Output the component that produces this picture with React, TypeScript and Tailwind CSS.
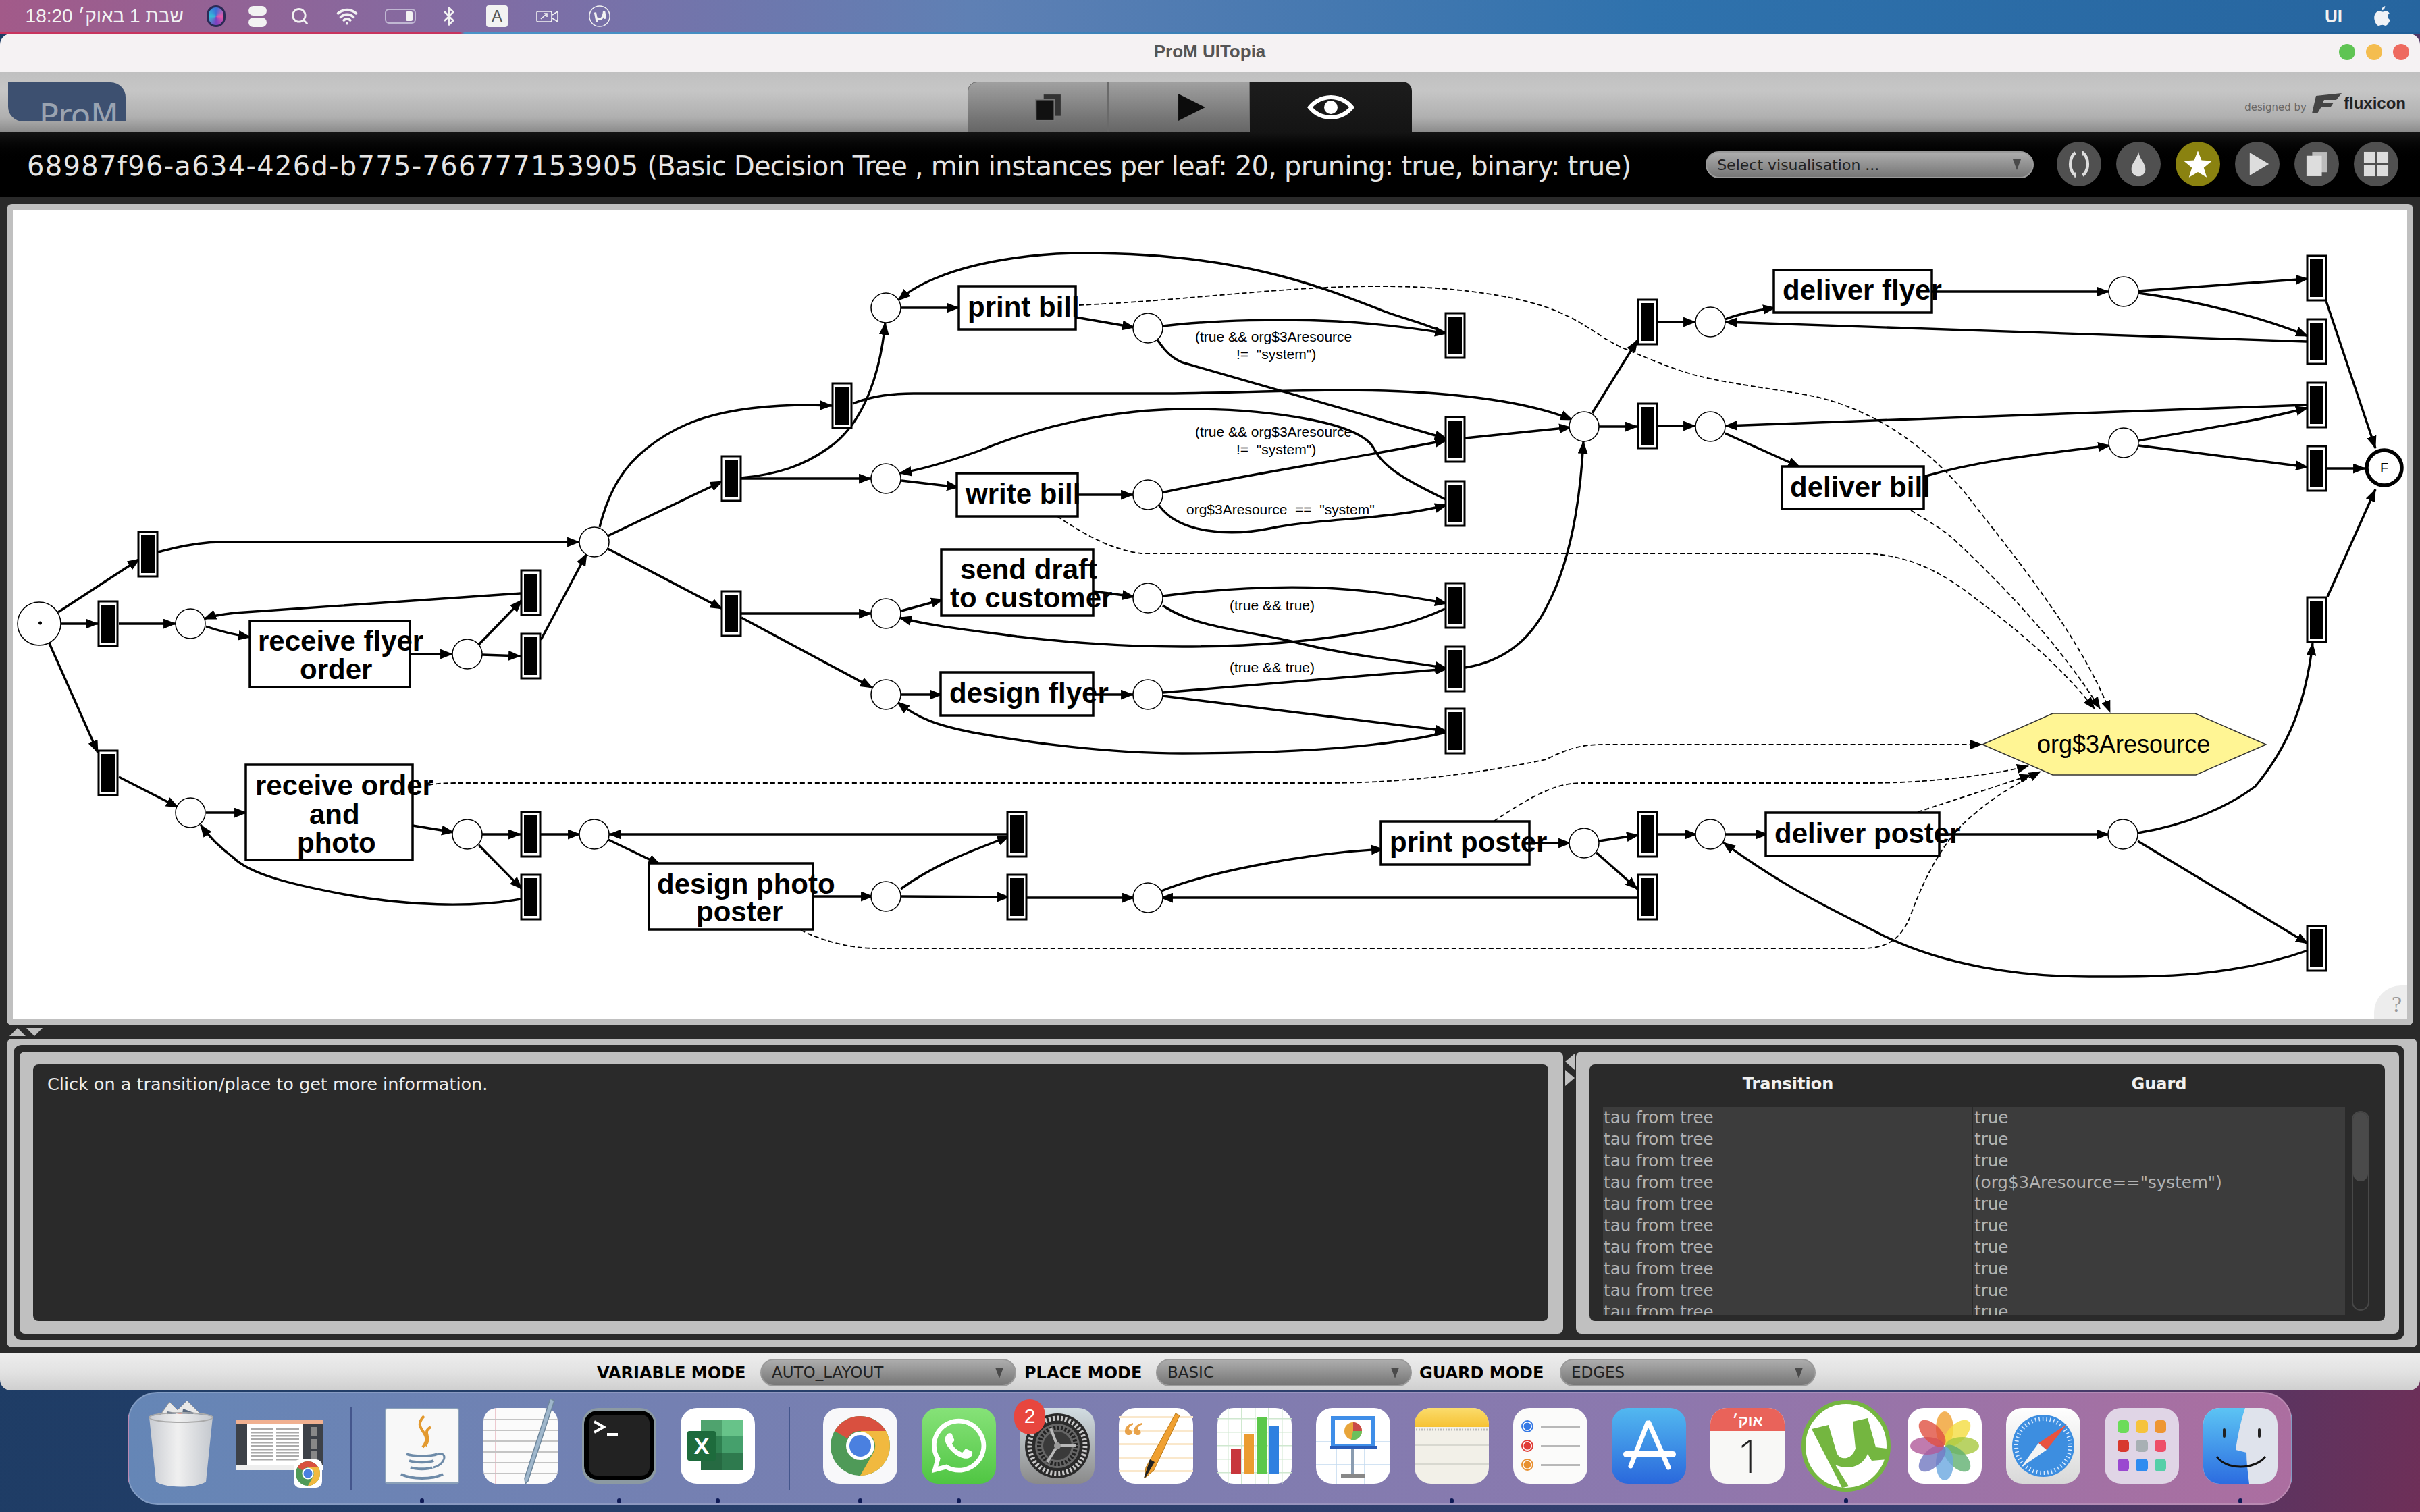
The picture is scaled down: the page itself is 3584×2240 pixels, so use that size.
import { Search, Wifi, Bluetooth } from 'lucide-react'
import { FaWhatsapp } from 'react-icons/fa'

// one canvas unit = one page pixel, the viewBox is offset by the panel's place on the page
const bars: [number, number][] = [
  [219, 821], [160, 924], [786, 878], [786, 972], [1083, 709], [1083, 909], [1247, 601],
  [2155, 497], [2155, 651], [2155, 746], [2155, 897], [2155, 991], [2155, 1083],
  [2440, 477], [2440, 631], [3431, 412], [3431, 506], [3431, 600], [3431, 694], [3431, 918],
  [160, 1145], [786, 1236], [786, 1329], [1506, 1236], [1506, 1329], [2440, 1236], [2440, 1329], [3431, 1405],
]

const places: [number, number][] = [
  [282, 924], [692, 969], [880, 803], [1312, 456], [1312, 709], [1312, 909], [1312, 1029],
  [1700, 486], [1700, 733], [1700, 886], [1700, 1029], [2346, 632], [2533, 477], [2533, 632],
  [3145, 432], [3145, 656], [282, 1204], [692, 1236], [880, 1236], [1312, 1328], [1700, 1330],
  [2346, 1249], [2533, 1236], [3144, 1236],
]

const boxes = [
  [370, 920, 237, 98], [1420, 424, 173, 64], [1417, 701, 179, 64], [1394, 814, 225, 98], [1393, 996, 226, 64],
  [2627, 400, 234, 63], [2639, 691, 210, 63], [364, 1133, 247, 141], [961, 1279, 243, 98], [2045, 1217, 220, 64], [2615, 1204, 257, 64],
]

const labels: [string, number, number][] = [
  ['receive flyer', 382, 964], ['order', 444, 1006], ['print bill', 1433, 469], ['write bill', 1430, 746],
  ['send draft', 1422, 858], ['to customer', 1407, 900], ['design flyer', 1406, 1041], ['deliver flyer', 2640, 444],
  ['deliver bill', 2651, 736], ['receive order', 378, 1178], ['and', 458, 1221], ['photo', 440, 1263],
  ['design photo', 973, 1324], ['poster', 1031, 1365], ['print poster', 2058, 1262], ['deliver poster', 2628, 1249],
]

const guards: [string, number, number][] = [
  ['(true && org$3Aresource', 1770, 506], ['!=  "system")', 1831, 532],
  ['(true && org$3Aresource', 1770, 647], ['!=  "system")', 1831, 673],
  ['org$3Aresource  ==  "system"', 1757, 762], ['(true && true)', 1821, 904], ['(true && true)', 1821, 996],
]

const edges = [
  'M86 907L207 828', 'M90 924L145 924', 'M176 924L260 924', 'M305 928C325 935 345 940 371 944',
  'M771 879L348 908C330 910 315 912 302 917', 'M607 969L670 969', 'M709 955L773 889', 'M714 970L771 972',
  'M801 948L869 820', 'M234 818C270 808 300 803 329 803L858 803', 'M900 794L1070 713', 'M900 813L1070 902',
  'M888 781C902 725 925 690 957 665C1000 630 1060 600 1200 600L1232 601',
  'M1098 708C1150 703 1190 690 1225 665C1285 625 1305 540 1311 478', 'M1098 709L1290 709', 'M1098 909L1290 909', 'M1098 915L1292 1019',
  'M1335 456L1420 456', 'M1593 470L1680 485', 'M1722 483C1800 474 1900 472 1980 476C2050 480 2100 487 2143 494',
  'M1714 503C1725 520 1735 530 1751 537L2143 650',
  'M2143 494C2100 475 2070 470 2042 458C1950 422 1830 375 1606 375C1520 375 1440 390 1391 410C1365 420 1345 432 1330 445',
  'M1263 598C1290 587 1320 583 1353 583L1720 583C1800 583 1900 578 1988 578C2120 578 2250 590 2329 622',
  'M2170 649L2327 633', 'M1720 730C1860 700 2000 680 2143 652', 'M1335 712L1420 722', 'M1596 733L1678 733',
  'M1716 748C1745 790 1820 795 1880 783C1950 768 2060 770 2143 748',
  'M2143 741C2090 715 2050 695 2035 665C2015 625 1880 606 1759 606C1640 606 1530 635 1450 668C1410 682 1370 695 1332 701',
  'M1335 905L1397 888', 'M1619 876L1680 884', 'M1722 883C1800 873 1880 868 1960 871C2030 874 2090 884 2143 894',
  'M1722 897C1770 930 1850 935 1912 950C1990 970 2070 978 2143 990',
  'M2140 902C2090 925 2050 932 2011 938C1930 952 1840 958 1751 958C1650 958 1570 950 1506 943C1450 935 1380 928 1332 915',
  'M2170 989C2225 980 2265 950 2290 900C2325 835 2340 750 2345 654', 'M1335 1029L1395 1029', 'M1619 1029L1678 1029',
  'M1722 1026L2143 991', 'M1722 1031L2143 1083',
  'M2141 1085C2040 1110 1880 1116 1751 1116C1640 1116 1520 1100 1440 1085C1390 1075 1360 1065 1329 1040',
  'M2358 612L2425 504', 'M2368 632L2425 632', 'M2455 477L2511 477', 'M2455 631L2511 631', 'M2555 473C2575 465 2600 460 2629 456',
  'M2861 432L3123 432', 'M3167 431L3418 413', 'M3167 434C3250 445 3350 470 3418 498', 'M3416 506L2555 477',
  'M2555 642L2666 692', 'M2849 706C2940 680 3030 672 3125 660', 'M3167 653C3260 635 3340 625 3418 604', 'M3167 660L3418 692',
  'M3416 600L2555 631', 'M3447 694L3503 694', 'M3445 446L3518 664', 'M3447 884L3518 725',
  'M73 953L145 1115', 'M176 1151L264 1196', 'M305 1204L365 1204', 'M611 1223L672 1233', 'M714 1236L771 1236', 'M801 1236L859 1236',
  'M709 1252L773 1317', 'M771 1332C700 1345 600 1342 510 1325C430 1310 370 1295 345 1270C325 1255 310 1240 297 1222',
  'M901 1244L978 1281', 'M1491 1236L902 1236', 'M1334 1317C1385 1280 1440 1260 1495 1239', 'M1204 1328L1293 1328', 'M1335 1328L1495 1329',
  'M1521 1330L1680 1330', 'M2425 1330L1719 1330', 'M1720 1320C1780 1295 1920 1265 2049 1258', 'M2265 1249L2326 1249', 'M2368 1246L2427 1237',
  'M2364 1263L2425 1317', 'M2456 1236L2513 1236', 'M2555 1236L2618 1236', 'M2872 1236L3123 1236',
  'M3166 1234C3240 1222 3300 1195 3340 1165C3390 1105 3415 1040 3425 953', 'M3166 1246L3418 1398',
  'M3418 1408C3300 1450 3180 1447 3094 1447C2990 1447 2880 1430 2791 1387C2720 1350 2650 1320 2552 1248',
]

const dashed = [
  'M1598 452C1760 445 1900 424 2042 424C2160 424 2260 440 2310 463C2350 480 2370 500 2400 514C2450 535 2490 552 2528 560C2600 575 2660 580 2702 591C2790 615 2860 670 2910 730C2980 820 3080 940 3125 1055',
  'M2830 756C2860 775 2880 785 2900 805C2990 890 3060 970 3110 1050',
  'M1566 765C1610 795 1650 815 1690 820L2762 820C2830 822 2880 850 2930 890C2990 935 3050 985 3102 1050',
  'M635 1163C645 1161 655 1160 673 1160L1965 1160C2100 1160 2220 1140 2290 1125C2320 1110 2340 1103 2374 1103L2935 1103',
  'M2212 1217C2260 1185 2300 1160 2341 1160L2767 1160C2850 1160 2940 1150 3004 1135',
  'M2840 1203L3008 1148',
  'M1186 1378C1220 1395 1260 1405 1299 1405L2759 1405C2790 1405 2815 1395 2830 1355C2850 1300 2880 1240 2925 1205C2960 1175 2990 1160 3022 1143',
]

function PetriNet() {
  return (
    <svg viewBox="19 311 3546 1199" className="block w-[3546px] h-[1199px]">
      <defs>
        <marker id="head" viewBox="0 0 18 14" refX="17" refY="7" markerWidth="19" markerHeight="15" markerUnits="userSpaceOnUse" orient="auto">
          <path d="M0 0L18 7L0 14z" />
        </marker>
        <marker id="headDash" viewBox="0 0 18 14" refX="17" refY="7" markerWidth="18" markerHeight="14" markerUnits="userSpaceOnUse" orient="auto">
          <path d="M0 0L18 7L0 14z" />
        </marker>
      </defs>
      {dashed.map((d, i) => (
        <path key={i} d={d} fill="none" stroke="#000" strokeWidth={1.8} strokeDasharray="7 4" markerEnd="url(#headDash)" />
      ))}
      {edges.map((d, i) => (
        <path key={i} d={d} fill="none" stroke="#000" strokeWidth={3.4} markerEnd="url(#head)" />
      ))}
      <polygon points="2936,1103 3040,1057 3251,1057 3356,1103 3252,1148 3040,1148" fill="#fff594" stroke="#333" strokeWidth={1.5} />
      <text x={3017} y={1115} fontSize={36} className="font-['Liberation_Sans',sans-serif]">org$3Aresource</text>
      {boxes.map(([x, y, w, h], i) => (
        <rect key={i} x={x} y={y} width={w} height={h} fill="#fff" stroke="#000" strokeWidth={3.5} />
      ))}
      {places.map(([cx, cy], i) => (
        <circle key={i} cx={cx} cy={cy} r={22} fill="#fff" stroke="#000" strokeWidth={1.5} />
      ))}
      <circle cx={58} cy={924} r={32} fill="#fff" stroke="#000" strokeWidth={1.5} />
      <circle cx={59.5} cy={923} r={2.5} />
      <circle cx={3531} cy={693} r={26} fill="#fff" stroke="#000" strokeWidth={5.5} />
      <text x={3531} y={700} fontSize={20} textAnchor="middle" className="font-['Liberation_Sans',sans-serif]">F</text>
      {bars.map(([cx, cy], i) => (
        <g key={i}>
          <rect x={cx - 14} y={cy - 33} width={28} height={66} fill="#fff" stroke="#000" strokeWidth={3} />
          <rect x={cx - 10} y={cy - 28} width={20} height={56} fill="#000" />
        </g>
      ))}
      {labels.map(([t, x, y], i) => (
        <text key={i} x={x} y={y} fontSize={42} fontWeight={700} className="font-['Liberation_Sans',sans-serif]">{t}</text>
      ))}
      {guards.map(([t, x, y], i) => (
        <text key={i} x={x} y={y} fontSize={21} xmlSpace="preserve" className="font-['Liberation_Sans',sans-serif]">{t}</text>
      ))}
    </svg>
  )
}

function Select({ label, className, small }: { label: string; className: string; small?: boolean }) {
  return (
    <div className={`flex items-center justify-between rounded-full border-2 border-[#9a9a9a] bg-gradient-to-b from-[#adadad] to-[#767676] ${className}`}>
      <span className={`font-['DejaVu_Sans',sans-serif] text-[#222] ${small ? 'text-[22px]' : 'text-[23px]'}`}>{label}</span>
      <svg viewBox="0 0 12 16" className="w-[14px] h-[16px]"><path d="M0 0H12L6 16z" fill="#4a4a4a" /></svg>
    </div>
  )
}

function RoundButton({ children, active }: { children: React.ReactNode; active?: boolean }) {
  return (
    <div className={`w-[66px] h-[66px] rounded-full flex items-center justify-center ${active ? 'bg-[#8a8210]' : 'bg-[#505050]'}`}>
      {children}
    </div>
  )
}

function HeaderButtons() {
  return (
    <div className="flex gap-[22px]">
      <RoundButton>
        <svg viewBox="0 0 40 44" className="w-[36px] h-[40px]" fill="none" stroke="#ddd" strokeWidth={5}>
          <path d="M14 3C3 12 3 32 14 41" /><path d="M26 3C37 12 37 32 26 41" />
          <path d="M14 36V44M26 0V8" strokeWidth={3} />
        </svg>
      </RoundButton>
      <RoundButton>
        <svg viewBox="0 0 30 44" className="w-[26px] h-[40px]"><path d="M15 1C17 14 27 20 27 31A12 12 0 0 1 3 31C3 20 13 14 15 1z" fill="#ddd" /></svg>
      </RoundButton>
      <RoundButton active>
        <svg viewBox="0 0 40 40" className="w-[44px] h-[44px]"><path d="M20 2L25 15L39 16L28 25L32 38L20 31L8 38L12 25L1 16L15 15z" fill="#fff" /></svg>
      </RoundButton>
      <RoundButton>
        <svg viewBox="0 0 30 36" className="w-[30px] h-[34px] ml-[6px]"><path d="M0 0L30 18L0 36z" fill="#ddd" /></svg>
      </RoundButton>
      <RoundButton>
        <svg viewBox="0 0 36 40" className="w-[34px] h-[38px]">
          <rect x="11" y="1" width="23" height="32" fill="#bbb" /><rect x="2" y="7" width="24" height="32" fill="#ddd" />
        </svg>
      </RoundButton>
      <RoundButton>
        <svg viewBox="0 0 40 40" className="w-[38px] h-[38px]">
          <rect x="1" y="1" width="17" height="17" fill="#ddd" /><rect x="22" y="1" width="17" height="17" fill="#ddd" />
          <rect x="1" y="22" width="17" height="17" fill="#ddd" /><rect x="22" y="22" width="17" height="17" fill="#ddd" />
        </svg>
      </RoundButton>
    </div>
  )
}

function MenuBar() {
  return (
    <div className="h-[48px] flex items-center bg-[linear-gradient(90deg,#a25a89_0%,#7d6ea6_22%,#5f80b4_40%,#2f72ad_68%,#26659f_100%)] text-[#f2f2f2]">
      <span dir="rtl" className="ml-[38px] w-[234px] whitespace-nowrap text-[28px] font-['Liberation_Sans',sans-serif]">שבת 1 באוק׳ 18:20</span>
      <div className="ml-[18px] w-[60px] flex justify-center">
        <div className="w-[28px] h-[32px] rounded-full bg-[conic-gradient(#3c6fd8,#e85aa8,#7a3fc0,#35c0d8,#3c6fd8)] border-[3px] border-[#2a2a55]" />
      </div>
      <div className="w-[62px] flex flex-col items-center gap-[3px]">
        <div className="w-[27px] h-[14px] rounded-full bg-[#f2f2f2]" />
        <div className="w-[27px] h-[14px] rounded-full bg-[#f2f2f2]" />
      </div>
      <div className="w-[64px] flex justify-center"><Search size={28} strokeWidth={2.4} /></div>
      <div className="w-[76px] flex justify-center"><Wifi size={32} strokeWidth={2.8} /></div>
      <div className="w-[82px] flex justify-center">
        <div className="w-[46px] h-[22px] rounded-[6px] border-2 border-[#d8d8e8]/70 flex justify-end pr-[3px] py-[2px]">
          <div className="w-[10px] rounded-[2px] bg-[#f2f2f2]" />
        </div>
      </div>
      <div className="w-[62px] flex justify-center"><Bluetooth size={30} strokeWidth={2} /></div>
      <div className="w-[80px] flex justify-center">
        <div className="w-[32px] h-[32px] rounded-[4px] bg-[#f2f2f2] text-[#555] text-[24px] leading-[32px] text-center font-['Liberation_Sans',sans-serif]">A</div>
      </div>
      <div className="w-[70px] flex justify-center">
        <svg viewBox="0 0 34 20" className="w-[34px] h-[22px]" fill="none" stroke="#f2f2f2" strokeWidth={1.6}>
          <rect x="1" y="3" width="22" height="15" rx="2" /><path d="M24 8L32 3V18L24 13" /><path d="M7 14L16 6M11 6H16V11" />
        </svg>
      </div>
      <div className="w-[84px] flex justify-center">
        <svg viewBox="0 0 36 36" className="w-[34px] h-[34px]" fill="none" stroke="#f2f2f2">
          <circle cx="18" cy="18" r="16" strokeWidth={1.6} /><path d="M11 12L14 27M14 20C18 26 24 22 25 10M25 10L27 22" strokeWidth={3.4} />
        </svg>
      </div>
      <span className="ml-auto text-[26px] font-['Liberation_Sans',sans-serif] font-bold">UI</span>
      <svg viewBox="0 0 24 28" className="ml-[46px] mr-[43px] w-[26px] h-[30px]" fill="#f0f2f6">
        <path d="M16 0C16 3 14 6 11 6C11 3 13 1 16 0zM12 8C14 8 15 7 17 7C19 7 21 8 22 10C19 12 19 17 23 19C22 22 19 27 17 27C15 27 14 26 12 26C10 26 9 27 7 27C4 27 1 20 1 16C1 10 5 7 8 7C10 7 11 8 12 8z" />
      </svg>
    </div>
  )
}

function Toolbar() {
  return (
    <div className="h-[89px] flex bg-[linear-gradient(180deg,#c0c0c0_0%,#c6c6c6_30%,#b0b0b0_75%,#8a8a8a_100%)]">
      <div className="w-[1433px] shrink-0 pt-[15px] pl-[12px]">
        <div className="w-[174px] h-[58px] overflow-hidden rounded-tr-[22px] rounded-bl-[22px] bg-[#3d5070] pl-[46px] pt-[22px]">
          <span className="block text-[48px] leading-[54px] text-[#9aa3b0] font-['DejaVu_Sans',sans-serif]">ProM</span>
        </div>
      </div>
      <div className="w-[658px] shrink-0 flex items-end">
        <div className="w-[208px] h-[75px] pl-[30px] flex items-center justify-center rounded-tl-[14px] border border-[#6a6a6a] bg-gradient-to-b from-[#a0a0a0] to-[#666]">
          <svg viewBox="0 0 40 40" className="w-[42px] h-[42px]">
            <rect x="14" y="2" width="24" height="30" fill="#333" /><rect x="3" y="9" width="26" height="30" fill="#111" stroke="#777" strokeWidth={2} />
          </svg>
        </div>
        <div className="w-[210px] h-[75px] pl-[38px] flex items-center justify-center border border-[#6a6a6a] bg-gradient-to-b from-[#a0a0a0] to-[#666]">
          <svg viewBox="0 0 40 40" className="w-[42px] h-[42px]"><path d="M1 1L39 20L1 39z" fill="#0c0c0c" /></svg>
        </div>
        <div className="w-[240px] h-[75px] flex items-center justify-center rounded-tr-[14px] bg-gradient-to-b from-[#1d1d1d] to-[#141414]">
          <svg viewBox="0 0 72 40" className="w-[72px] h-[42px]">
            <path fillRule="evenodd" d="M36 2C52 2 65 11 71 20C65 29 52 38 36 38C20 38 7 29 1 20C7 11 20 2 36 2zM36 8C25 8 15 13 9 20C15 27 25 32 36 32C47 32 57 27 63 20C57 13 47 8 36 8z" fill="#fff" />
            <circle cx="36" cy="20" r="10" fill="#fff" />
          </svg>
        </div>
      </div>
      <div className="flex-1 flex items-start justify-end pr-[21px] pt-[33px]">
        <span className="mt-[8px] mr-[6px] text-[15px] text-[#666] font-['DejaVu_Sans',sans-serif]">designed by</span>
        <svg viewBox="0 0 46 30" className="w-[46px] h-[30px] -mt-[2px]">
          <path d="M8 4L46 0L38 10H20L18 14H34L30 20H16L10 30H2z" fill="#444" />
        </svg>
        <span className="ml-[3px] text-[24px] leading-[26px] font-bold text-[#222] font-['Liberation_Sans',sans-serif]">fluxicon</span>
      </div>
    </div>
  )
}

function InfoTable() {
  const guardsCol = ['true', 'true', 'true', '(org$3Aresource=="system")', 'true', 'true', 'true', 'true', 'true', 'true']
  return (
    <div className="h-full rounded-[8px] bg-[#2a2a2a] pl-[20px] pr-[23px] font-['DejaVu_Sans',sans-serif]">
      <div className="h-[63px] pb-[5px] flex items-center text-[24px] font-bold text-[#f0f0f0]">
        <div className="w-[548px] text-center">Transition</div>
        <div className="w-[551px] text-center">Guard</div>
      </div>
      <div className="flex">
        <div className="w-[1099px] h-[308px] overflow-hidden bg-[#3c3c3c] text-[24.6px] leading-[32px] text-[#b2b2b2]">
          {guardsCol.map((g, i) => (
            <div key={i} className="flex h-[32px]">
              <div className="w-[548px] pl-[1px] border-r-2 border-[#2a2a2a]">tau from tree</div>
              <div className="pl-[2px]">{g}</div>
            </div>
          ))}
        </div>
        <div className="ml-[10px] mt-[6px] w-[26px] h-[296px] rounded-full border-2 border-[#484848]">
          <div className="h-[102px] rounded-full bg-[#4a4a4a]" />
        </div>
      </div>
    </div>
  )
}

function Window() {
  return (
    <div className="h-[2010px] flex flex-col rounded-t-[16px] rounded-b-[16px] overflow-hidden">
      <div className="h-[57px] shrink-0 flex items-center bg-[#f5f2f3] border-b border-[#a8a8a8]">
        <div className="flex-1 text-center pl-[119px] pb-[3px] text-[26px] font-bold text-[#555] font-['Liberation_Sans',sans-serif]">ProM UITopia</div>
        <div className="flex gap-[16px] pr-[16px] -mt-[2px]">
          <div className="w-[24px] h-[24px] rounded-full bg-[#5fc453]" />
          <div className="w-[24px] h-[24px] rounded-full bg-[#f4bd4f]" />
          <div className="w-[24px] h-[24px] rounded-full bg-[#ee6a5f]" />
        </div>
      </div>
      <Toolbar />
      <div className="h-[96px] shrink-0 flex items-center bg-gradient-to-b from-[#141414] via-[#000] to-[#000] pl-[40px] pr-[32px]">
        <div className="w-[2487px] mt-[4px] text-[40px] text-[#e4e4e4] whitespace-nowrap font-['DejaVu_Sans',sans-serif]">
          <span className="tracking-[1.3px]">68987f96-a634-426d-b775-766777153905</span>
          <span className="tracking-[-0.8px]"> (Basic Decision Tree , min instances per leaf: 20, pruning: true, binary: true)</span>
        </div>
        <Select label="Select visualisation ..." small className="w-[486px] h-[40px] pl-[15px] pr-[16px]" />
        <div className="ml-[34px] -mt-[2px]"><HeaderButtons /></div>
      </div>

      <div className="h-[1713px] shrink-0 bg-[#2a2a2a] pt-[10px] pl-[10px] pr-[4px] pb-[9px] flex flex-col">
        <div className="w-[3564px] h-[1217px] rounded-[8px] bg-[#c0c0c0] p-[9px]">
          <div className="relative h-[1199px] bg-white">
            <PetriNet />
            <div className="absolute right-0 bottom-0 w-[49px] h-[50px] pl-[18px] rounded-tl-[40px] bg-[#ededed] text-center text-[34px] leading-[56px] text-[#999] font-['Liberation_Serif',serif]">?</div>
          </div>
        </div>
        <div className="h-[20px] flex items-center gap-[1px] pl-[4px]">
          <svg viewBox="0 0 24 12" className="w-[24px] h-[12px]"><path d="M0 12L12 0L24 12z" fill="#c0c0c0" /></svg>
          <svg viewBox="0 0 24 12" className="w-[24px] h-[12px]"><path d="M0 0L24 0L12 12z" fill="#c0c0c0" /></svg>
        </div>
        <div className="w-[3570px] h-[457px] rounded-[8px] bg-[#c0c0c0] pt-[9px] pb-[11px] pl-[10px] pr-[19px]">
          <div className="h-full rounded-[12px] bg-[#2a2a2a] pt-[10px] pb-[9px] pl-[9px] pr-[8px] flex">
            <div className="w-[2286px] rounded-[8px] bg-[#c0c0c0] pt-[19px] pb-[19px] pl-[20px] pr-[22px]">
              <div className="h-full rounded-[8px] bg-[#2a2a2a] pl-[21px] pt-[10px] text-[25.5px] text-[#ececec] font-['DejaVu_Sans',sans-serif]">
                Click on a transition/place to get more information.
              </div>
            </div>
            <div className="w-[19px] pt-[3px] flex flex-col items-center">
              <svg viewBox="0 0 14 24" className="w-[14px] h-[24px]"><path d="M14 0V24L0 12z" fill="#c0c0c0" /></svg>
              <svg viewBox="0 0 14 24" className="w-[14px] h-[24px]"><path d="M0 0V24L14 12z" fill="#c0c0c0" /></svg>
            </div>
            <div className="w-[1219px] rounded-[8px] bg-[#c0c0c0] pt-[19px] pb-[19px] pl-[20px] pr-[21px]">
              <InfoTable />
            </div>
          </div>
        </div>
      </div>

      <div className="h-[55px] shrink-0 pt-[2px] flex items-center pl-[884px] bg-[linear-gradient(180deg,#ededed_0%,#e2e2e2_50%,#cfcfcf_100%)] text-[24px] font-bold text-black font-['DejaVu_Sans',sans-serif]">
        <span className="w-[242px]">VARIABLE MODE</span>
        <Select label="AUTO_LAYOUT" className="w-[379px] h-[41px] pl-[15px] pr-[16px] font-normal" />
        <span className="ml-[12px] w-[195px]">PLACE MODE</span>
        <Select label="BASIC" className="w-[379px] h-[41px] pl-[15px] pr-[16px] font-normal" />
        <span className="ml-[11px] w-[208px]">GUARD MODE</span>
        <Select label="EDGES" className="w-[379px] h-[41px] pl-[15px] pr-[16px] font-normal" />
      </div>
    </div>
  )
}

function Trash() {
  return (
    <svg viewBox="0 0 110 130" className="w-[110px] h-[130px] -mt-[13px] -mb-[5px]">
      <defs>
        <linearGradient id="cup" x1="0" x2="1"><stop offset="0" stopColor="#c9ccd2" /><stop offset=".45" stopColor="#f0f0f0" /><stop offset="1" stopColor="#c4c8ce" /></linearGradient>
      </defs>
      <path d="M24 24L38 4L50 16L64 2L84 22z" fill="#e8e8e8" stroke="#999" />
      <path d="M34 18L48 20L46 32L36 30zM58 14L74 20L70 32L56 30z" fill="#5a6a80" />
      <path d="M48 22L56 20L56 30L48 30z" fill="#c8584c" />
      <path d="M8 26C22 20 88 20 102 26L92 122C78 132 32 132 18 122z" fill="url(#cup)" />
      <ellipse cx="55" cy="27" rx="47" ry="7" fill="none" stroke="#aaa" strokeWidth="2" />
    </svg>
  )
}

function ChromeLogo({ r = 44, cx = 55, cy = 56 }: { r?: number; cx?: number; cy?: number }) {
  const s = r / 44
  return (
    <g transform={`translate(${cx} ${cy}) scale(${s})`}>
      <circle r="44" fill="#4f9a58" />
      <path d="M0 -44A44 44 0 0 1 38 -22L0 -22A22 22 0 0 0 -19 -11L-38 -22A44 44 0 0 1 0 -44z" fill="#d9503f" />
      <path d="M38 -22A44 44 0 0 1 0 44L19 11A22 22 0 0 0 19 -11L0 -22z" fill="#f1b93f" />
      <circle r="21" fill="#fff" />
      <circle r="16" fill="#4a80e0" />
    </g>
  )
}

function ChromeDoc() {
  return (
    <svg viewBox="0 0 130 118" className="w-[130px] h-[118px] -mb-[6px]">
      <rect x="0" y="18" width="130" height="74" fill="#fff" />
      <rect x="0" y="18" width="130" height="5" fill="#f0b090" />
      <rect x="0" y="23" width="17" height="62" fill="#3d4148" />
      <rect x="100" y="23" width="30" height="62" fill="#3d4148" />
      <rect x="0" y="85" width="100" height="7" fill="#eee" />
      <rect x="112" y="28" width="9" height="14" fill="#888" /><rect x="112" y="46" width="9" height="14" fill="#888" /><rect x="112" y="64" width="9" height="14" fill="#888" />
      {[30, 35, 40, 45, 50, 55, 60, 65, 70, 75].map(y => (
        <g key={y}><rect x="22" y={y} width="34" height="2.5" fill="#aaa" /><rect x="60" y={y} width="34" height="2.5" fill="#aaa" /></g>
      ))}
      <rect x="86" y="76" width="42" height="42" rx="9" fill="#fff" />
      <ChromeLogo r={18} cx={107} cy={97} />
    </svg>
  )
}

function Java() {
  return (
    <svg viewBox="0 0 110 112" className="w-[110px] h-[112px]">
      <rect x="1" y="1" width="108" height="110" rx="2" fill="#f8f8f8" stroke="#8aa0b8" strokeWidth="2" />
      <path d="M58 12C38 32 74 36 56 58M68 28C54 36 70 42 60 56" fill="none" stroke="#e39a30" strokeWidth="4" />
      <path d="M32 68C42 72 68 72 78 68M36 78C44 81 66 81 72 78M38 88C46 91 64 91 70 88M24 98C40 106 70 106 86 98" fill="none" stroke="#6e8ba8" strokeWidth="4" />
      <path d="M78 68C94 64 90 84 72 88" fill="none" stroke="#6e8ba8" strokeWidth="3" />
    </svg>
  )
}

function TextEdit() {
  return (
    <svg viewBox="0 0 110 126" className="w-[110px] h-[126px] -mt-[14px]">
      <rect x="0" y="14" width="110" height="112" rx="20" fill="#fbfbfb" />
      <path d="M18 14V126" stroke="#e8b8c0" strokeWidth="1.5" />
      {[30, 46, 62, 78, 94, 110].map(y => <rect key={y} x="0" y={y} width="110" height="2" fill="#c4c4c4" />)}
      <path d="M99 0L105 3L66 122L62 126L61 118z" fill="#9fb7cc" stroke="#6f879c" strokeWidth="1.5" />
    </svg>
  )
}

function Terminal() {
  return (
    <svg viewBox="0 0 110 112" className="w-[110px] h-[112px]">
      <rect x="0" y="0" width="110" height="112" rx="24" fill="#8c9aa2" />
      <rect x="3" y="4" width="104" height="102" rx="20" fill="#000" />
      <rect x="10" y="10" width="90" height="90" rx="12" fill="#222" />
      <path d="M18 20L32 28L18 36" fill="none" stroke="#fff" strokeWidth="4" />
      <rect x="37" y="37" width="16" height="5" fill="#fff" />
    </svg>
  )
}

function Excel() {
  return (
    <svg viewBox="0 0 110 112" className="w-[110px] h-[112px]">
      <rect width="110" height="112" rx="24" fill="#fff" />
      <path d="M30 18H92V42H30z" fill="#4fa36e" /><path d="M61 18H92V42H61z" fill="#67c389" />
      <path d="M30 42H92V66H30z" fill="#2e8050" /><path d="M61 42H92V66H61z" fill="#45a06c" />
      <path d="M30 66H92V92H30z" fill="#266a42" /><path d="M61 66H92V92H61z" fill="#2e7a4e" />
      <rect x="10" y="34" width="42" height="44" rx="3" fill="#1d6b3c" />
      <text x="31" y="68" fontSize="34" fontWeight="700" fill="#fff" textAnchor="middle" className="font-['Liberation_Sans',sans-serif]">X</text>
    </svg>
  )
}

function Chrome() {
  return (
    <svg viewBox="0 0 110 112" className="w-[110px] h-[112px]">
      <rect width="110" height="112" rx="24" fill="#f8f8fa" />
      <ChromeLogo />
    </svg>
  )
}

function WhatsApp() {
  return (
    <div className="w-[110px] h-[112px] rounded-[24px] bg-gradient-to-b from-[#86e278] to-[#4fc642] flex items-center justify-center text-white">
      <FaWhatsapp size={92} />
    </div>
  )
}

function Settings() {
  return (
    <div className="relative">
      <svg viewBox="0 0 110 112" className="w-[110px] h-[112px]">
        <defs>
          <linearGradient id="settingsBg" x1="0" x2="0" y1="0" y2="1"><stop offset="0" stopColor="#d2dde2" /><stop offset="1" stopColor="#8a8a8a" /></linearGradient>
        </defs>
        <rect width="110" height="112" rx="24" fill="url(#settingsBg)" />
        <circle cx="55" cy="56" r="48" fill="#2a2a2a" />
        <circle cx="55" cy="56" r="41" fill="none" stroke="#c8c8c8" strokeWidth="7" strokeDasharray="3 3" />
        <circle cx="55" cy="56" r="33" fill="#666" />
        <circle cx="55" cy="56" r="27" fill="none" stroke="#222" strokeWidth="6" strokeDasharray="3 2.5" />
        <circle cx="55" cy="56" r="21" fill="#3a3a3a" />
        <path d="M55 56L45 30M55 56L82 56M55 56L40 80" stroke="#b8b8b8" strokeWidth="4" />
        <circle cx="55" cy="56" r="5" fill="#999" />
      </svg>
      <div className="absolute -top-[13px] -left-[9px] w-[46px] h-[52px] rounded-full bg-[#e8463e] text-center text-[30px] leading-[50px] text-white font-['Liberation_Sans',sans-serif]">2</div>
    </div>
  )
}

function Pages() {
  return (
    <svg viewBox="0 0 110 112" className="w-[110px] h-[112px]">
      <rect width="110" height="112" rx="24" fill="#fff" />
      {[12, 32, 52, 72, 92].map(y => <rect key={y} x="0" y={y} width="110" height="3" fill="#fae8cc" />)}
      <text x="6" y="62" fontSize="60" fontWeight="700" fill="#e8a24a" className="font-['Liberation_Serif',serif]">“</text>
      <path d="M84 8L90 11L52 92L38 104L40 88z" fill="#f0a030" stroke="#b87818" />
      <path d="M46 76L53 80L40 102L37 104z" fill="#222" />
    </svg>
  )
}

function Numbers() {
  return (
    <svg viewBox="0 0 110 112" className="w-[110px] h-[112px]">
      <rect width="110" height="112" rx="24" fill="#fff" />
      {[15, 35, 55, 75, 95].map(v => <rect key={v} x={v} y="0" width="1.5" height="112" fill="#cfe8cf" />)}
      {[15, 35, 55, 75, 95].map(v => <rect key={v} x="0" y={v} width="110" height="1.5" fill="#cfe8cf" />)}
      <rect x="20" y="60" width="15" height="37" fill="#c8363c" />
      <rect x="39" y="38" width="15" height="59" fill="#eb9c30" />
      <rect x="58" y="14" width="15" height="83" fill="#5cc84a" />
      <rect x="76" y="26" width="15" height="71" fill="#2f80e0" />
    </svg>
  )
}

function Keynote() {
  return (
    <svg viewBox="0 0 110 112" className="w-[110px] h-[112px]">
      <rect width="110" height="112" rx="24" fill="#fff" />
      <path d="M0 50H110M0 84H110M30 50V112M72 50V112" stroke="#c4daf0" strokeWidth="1.5" fill="none" />
      <rect x="22" y="12" width="66" height="46" fill="#3f8ee8" />
      <rect x="28" y="18" width="54" height="36" fill="#fff" />
      <rect x="20" y="56" width="70" height="5" fill="#2a5cb8" />
      <circle cx="55" cy="34" r="13" fill="#e8a53a" />
      <path d="M55 34V21A13 13 0 0 1 68 34z" fill="#c94a48" />
      <path d="M55 34H68A13 13 0 0 1 52 47z" fill="#6cc05c" />
      <rect x="52" y="61" width="5" height="38" fill="#8a9cb0" />
      <rect x="37" y="97" width="36" height="6" fill="#888" />
    </svg>
  )
}

function Notes() {
  return (
    <svg viewBox="0 0 110 112" className="w-[110px] h-[112px]">
      <defs>
        <linearGradient id="noteTop" x1="0" x2="0" y1="0" y2="1"><stop offset="0" stopColor="#fbdc6c" /><stop offset="1" stopColor="#f6c234" /></linearGradient>
      </defs>
      <rect width="110" height="112" rx="24" fill="#f2f0e8" />
      <path d="M0 28V24A24 24 0 0 1 24 0H86A24 24 0 0 1 110 24V28z" fill="url(#noteTop)" />
      <path d="M2 32H108" stroke="#bbb" strokeWidth="3" strokeDasharray="2 2" />
      <rect y="54" width="110" height="2" fill="#d8d8d0" /><rect y="82" width="110" height="2" fill="#d8d8d0" />
    </svg>
  )
}

function Reminders() {
  return (
    <svg viewBox="0 0 110 112" className="w-[110px] h-[112px]">
      <rect width="110" height="112" rx="24" fill="#fbfbfa" />
      {[['#3478e5', 27], ['#e03c36', 56], ['#e89030', 84]].map(([c, y]) => (
        <g key={y as number}>
          <circle cx="21" cy={y as number} r="8" fill="#fff" stroke={c as string} strokeWidth="2" />
          <circle cx="21" cy={y as number} r="5.5" fill={c as string} />
          <rect x="41" y={(y as number) - 1} width="58" height="3" fill="#b8b8b8" />
        </g>
      ))}
    </svg>
  )
}

function AppStore() {
  return (
    <svg viewBox="0 0 110 112" className="w-[110px] h-[112px]">
      <defs>
        <linearGradient id="storeBg" x1="0" x2="0" y1="0" y2="1"><stop offset="0" stopColor="#52b8f0" /><stop offset="1" stopColor="#2a68dc" /></linearGradient>
      </defs>
      <rect width="110" height="112" rx="24" fill="url(#storeBg)" />
      <path d="M53 22L28 86M55 22L84 88" stroke="#fff" strokeWidth="7" strokeLinecap="round" />
      <rect x="17" y="64" width="78" height="9" rx="4.5" fill="#fff" />
    </svg>
  )
}

function Calendar() {
  return (
    <svg viewBox="0 0 110 112" className="w-[110px] h-[112px]">
      <rect width="110" height="112" rx="24" fill="#f8f8f6" />
      <path d="M0 34V24A24 24 0 0 1 24 0H86A24 24 0 0 1 110 24V34z" fill="#e9635a" />
      <text x="55" y="26" fontSize="22" fontWeight="700" fill="#fff" textAnchor="middle" className="font-['Liberation_Sans',sans-serif]">אוק׳</text>
      <text x="55" y="96" fontSize="66" fontWeight="200" fill="#222" textAnchor="middle" className="font-['Inter',sans-serif]">1</text>
    </svg>
  )
}

function UTorrent() {
  return (
    <svg viewBox="0 0 132 136" className="w-[132px] h-[136px] -my-[12px]">
      <ellipse cx="66" cy="68" rx="63" ry="65" fill="#fff" stroke="#74b640" strokeWidth="6" />
      <path fill="#74b640" d="M15 43L40 37L52 78C56 90 74 90 80 72L76 32L98 27L110 70L126 72L128 88L104 90L98 80C90 100 68 104 50 96L70 128L60 130z" />
    </svg>
  )
}

function Photos() {
  const colors = ['#f0a030', '#f4dc40', '#a8c840', '#60b070', '#6aa8e0', '#7078c0', '#b05a9a', '#e05040']
  return (
    <svg viewBox="0 0 110 112" className="w-[110px] h-[112px]">
      <rect width="110" height="112" rx="24" fill="#fff" />
      {colors.map((c, i) => (
        <ellipse key={c} cx="55" cy="30" rx="13" ry="25" fill={c} opacity=".8" transform={`rotate(${i * 45} 55 56)`} />
      ))}
    </svg>
  )
}

function Safari() {
  return (
    <svg viewBox="0 0 110 112" className="w-[110px] h-[112px]">
      <defs>
        <linearGradient id="safariBg" x1="0" x2="0" y1="0" y2="1"><stop offset="0" stopColor="#fff" /><stop offset="1" stopColor="#d8d8d8" /></linearGradient>
      </defs>
      <rect width="110" height="112" rx="24" fill="url(#safariBg)" />
      <circle cx="55" cy="56" r="46" fill="#3d8ee0" />
      <circle cx="55" cy="56" r="40" fill="none" stroke="#dcecff" strokeWidth="6" strokeDasharray="1.5 4" />
      <path d="M90 24L60 62L48 52z" fill="#e9523f" />
      <path d="M22 88L60 62L48 52z" fill="#f4f4f4" />
    </svg>
  )
}

function Launchpad() {
  const colors = ['#6cdc5a', '#f6c33c', '#ee9632', '#d8392e', '#a8b0b4', '#ee4e68', '#9a48d0', '#2f8cf0', '#56cfa8']
  return (
    <div className="w-[110px] h-[112px] rounded-[24px] bg-[#e0d5e6] grid grid-cols-3 gap-[10px] px-[19px] py-[18px]">
      {colors.map(c => <div key={c} className="rounded-[5px]" style={{ background: c }} />)}
    </div>
  )
}

function Finder() {
  return (
    <svg viewBox="0 0 110 112" className="w-[110px] h-[112px]">
      <defs>
        <linearGradient id="finderBg" x1="0" x2="0" y1="0" y2="1"><stop offset="0" stopColor="#5cc4f4" /><stop offset="1" stopColor="#2c6ce0" /></linearGradient>
      </defs>
      <rect width="110" height="112" rx="24" fill="#dfe3ec" />
      <path d="M24 0H62C54 24 50 48 48 62L64 66C64 80 66 96 68 112H24A24 24 0 0 1 0 88V24A24 24 0 0 1 24 0z" fill="url(#finderBg)" />
      <rect x="29" y="30" width="4" height="14" rx="2" fill="#222" /><rect x="81" y="30" width="4" height="14" rx="2" fill="#222" />
      <path d="M20 72C34 92 76 92 92 72" fill="none" stroke="#111" strokeWidth="3" />
    </svg>
  )
}

const dockGroups: [React.ComponentType, boolean][][] = [
  [[Trash, false], [ChromeDoc, false]],
  [[Java, true], [TextEdit, false], [Terminal, true], [Excel, true]],
  [[Chrome, true], [WhatsApp, true], [Settings, false], [Pages, false], [Numbers, false], [Keynote, false], [Notes, true], [Reminders, false], [AppStore, false], [Calendar, false], [UTorrent, true], [Photos, false], [Safari, false], [Launchpad, false], [Finder, true]],
]

function Dock() {
  return (
    <div className="mt-[2px] ml-[189px] w-[3206px] h-[167px] rounded-[44px] border-2 border-[#ffffff30] pl-[4px] flex bg-[linear-gradient(90deg,#6586b6_0%,#7480b2_25%,#7f7db0_50%,#8c78ae_70%,#ac6ea0_100%)]">
      {dockGroups.map((group, g) => (
        <div key={g} className="flex">
          {g > 0 && (
            <div className="w-[65px] flex justify-center pt-[20px]">
              <div className="w-[2px] h-[124px] bg-[#44568c]" />
            </div>
          )}
          {group.map(([Icon, running], i) => (
            <div key={i} className="w-[146px] h-[163px] pt-[22px] flex flex-col items-center">
              <div className="h-[112px] flex items-center justify-center"><Icon /></div>
              <div className={`mt-[22px] w-[6px] h-[7px] rounded-full ${running ? 'bg-[#0e1a56]' : ''}`} />
            </div>
          ))}
        </div>
      ))}
    </div>
  )
}

export default function App() {
  return (
    <div className="w-[3584px] h-[2240px] overflow-hidden bg-[linear-gradient(100deg,#1c3c64_0%,#2a3f6c_50%,#383e70_82%,#6e2f58_100%)]">
      <MenuBar />
      <div className="h-[2px] bg-[linear-gradient(90deg,#c8345e_0%,#c8345e_19%,#4a94c8_19.2%,#1f5f98_100%)]" />
      <Window />
      <Dock />
    </div>
  )
}
